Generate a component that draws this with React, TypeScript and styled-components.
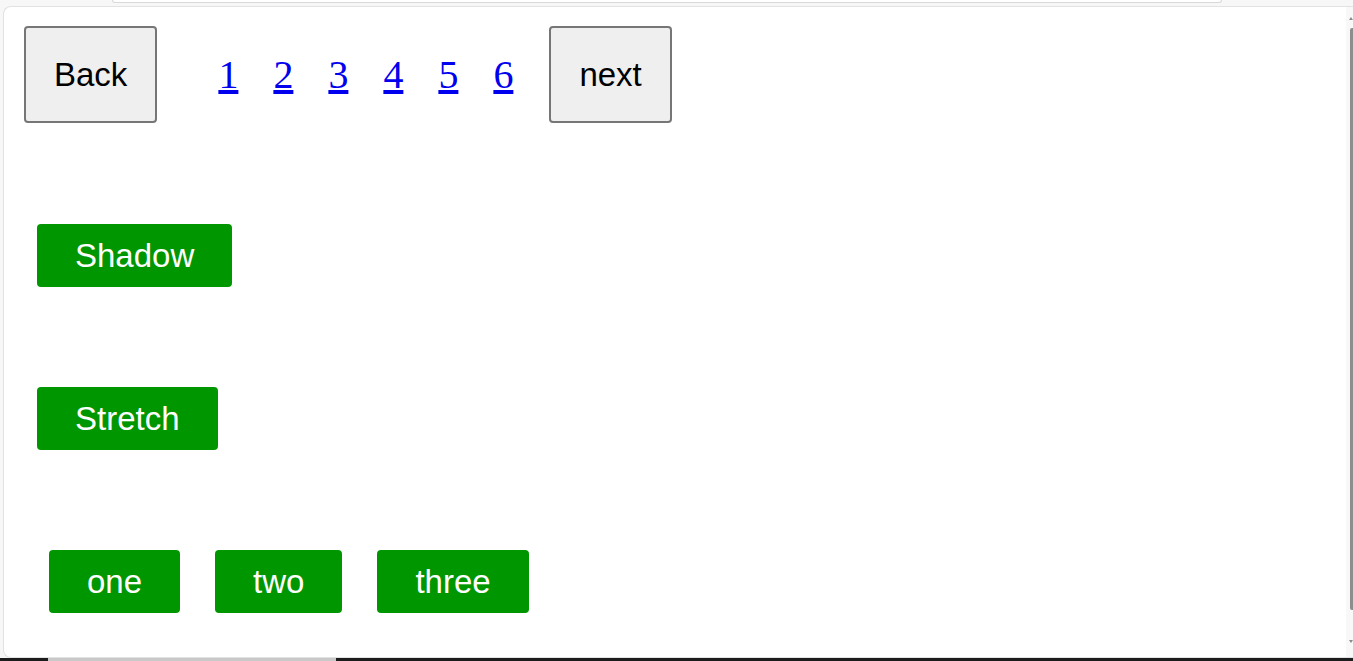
import React from 'react';
import styled, { createGlobalStyle } from 'styled-components';

const GlobalStyle = createGlobalStyle`
  html, body {
    margin: 0;
    padding: 0;
    background: #f7f7f7;
    overflow: hidden;
  }
`;

const Frame = styled.div`
  height: 661px;
  display: flex;
  flex-direction: column;
`;

const TopStub = styled.div`
  height: 2px;
  margin: 0 131px 0 112px;
  background: #ffffff;
  border: 1px solid #d9d9d9;
  border-top: none;
  border-radius: 0 0 6px 6px;
`;

const Card = styled.div`
  flex: 1;
  display: flex;
  margin: 3px 0 0 3px;
  background: #ffffff;
  border: 1px solid #e2e2e2;
  border-right: none;
  border-radius: 8px 0 0 8px;
  overflow: hidden;
`;

const Content = styled.main`
  flex: 1;
  display: flex;
  flex-direction: column;
  align-items: flex-start;
  padding: 19px 20px;
  font-family: 'Liberation Sans', Arial, sans-serif;
`;

const Scrollbar = styled.div`
  width: 7px;
  background: #f8f8f8;
  display: flex;
  flex-direction: column;
  align-items: flex-end;
  padding: 10px 0 14px;
`;

const Arrow = styled.div<{ $down?: boolean }>`
  width: 0;
  height: 0;
  border-left: 2px solid transparent;
  border-right: 2px solid transparent;
  ${(p) => (p.$down ? 'border-top: 3px solid #8a8a8a;' : 'border-bottom: 3px solid #8a8a8a;')}
`;

const Thumb = styled.div`
  flex: 1;
  width: 3px;
  margin: 8px 0 30px;
  background: #8d8d8d;
  border-radius: 2px 0 0 2px;
`;

const Taskbar = styled.div`
  height: 3px;
  display: flex;
  background: #1c1c1c;
`;

const TaskItem = styled.div`
  width: 288px;
  margin-left: 48px;
  background: #c9c9c9;
`;

const NavRow = styled.nav`
  display: flex;
  align-items: center;
`;

const NavButton = styled.button`
  font-family: 'Liberation Sans', Arial, sans-serif;
  font-size: 33px;
  line-height: 37px;
  color: #000000;
  background: #efefef;
  border: 2px solid #767676;
  border-radius: 4px;
  padding: 28px 28px;
  cursor: pointer;
`;

const Pages = styled.ul`
  display: flex;
  gap: 35px;
  list-style: none;
  margin: 0 36px 0 61px;
  padding: 0;
`;

const PageLink = styled.a`
  font-family: 'Liberation Serif', 'Times New Roman', serif;
  font-size: 40px;
  line-height: 46px;
  color: #0000ee;
  text-decoration: underline;
`;

const GreenButton = styled.button`
  font-family: 'Liberation Sans', Arial, sans-serif;
  font-size: 33px;
  line-height: 37px;
  color: #ffffff;
  background: #009600;
  border: none;
  border-radius: 4px;
  padding: 13px 38px;
  cursor: pointer;
`;

const Single = styled.div<{ $top: number }>`
  margin: ${(p) => p.$top}px 0 0 13px;
`;

const ButtonRow = styled.div`
  display: flex;
  gap: 35px;
  margin: 100px 0 0 25px;
`;

const pages = [1, 2, 3, 4, 5, 6];

export default function App() {
  return (
    <>
      <GlobalStyle />
      <Frame>
        <TopStub />
        <Card>
          <Content>
            <NavRow>
              <NavButton>Back</NavButton>
              <Pages>
                {pages.map((n) => (
                  <li key={n}>
                    <PageLink href="#">{n}</PageLink>
                  </li>
                ))}
              </Pages>
              <NavButton>next</NavButton>
            </NavRow>

            <Single $top={101}>
              <GreenButton>Shadow</GreenButton>
            </Single>

            <Single $top={100}>
              <GreenButton>Stretch</GreenButton>
            </Single>

            <ButtonRow>
              <GreenButton>one</GreenButton>
              <GreenButton>two</GreenButton>
              <GreenButton>three</GreenButton>
            </ButtonRow>
          </Content>
          <Scrollbar>
            <Arrow />
            <Thumb />
            <Arrow $down />
          </Scrollbar>
        </Card>
        <Taskbar>
          <TaskItem />
        </Taskbar>
      </Frame>
    </>
  );
}
